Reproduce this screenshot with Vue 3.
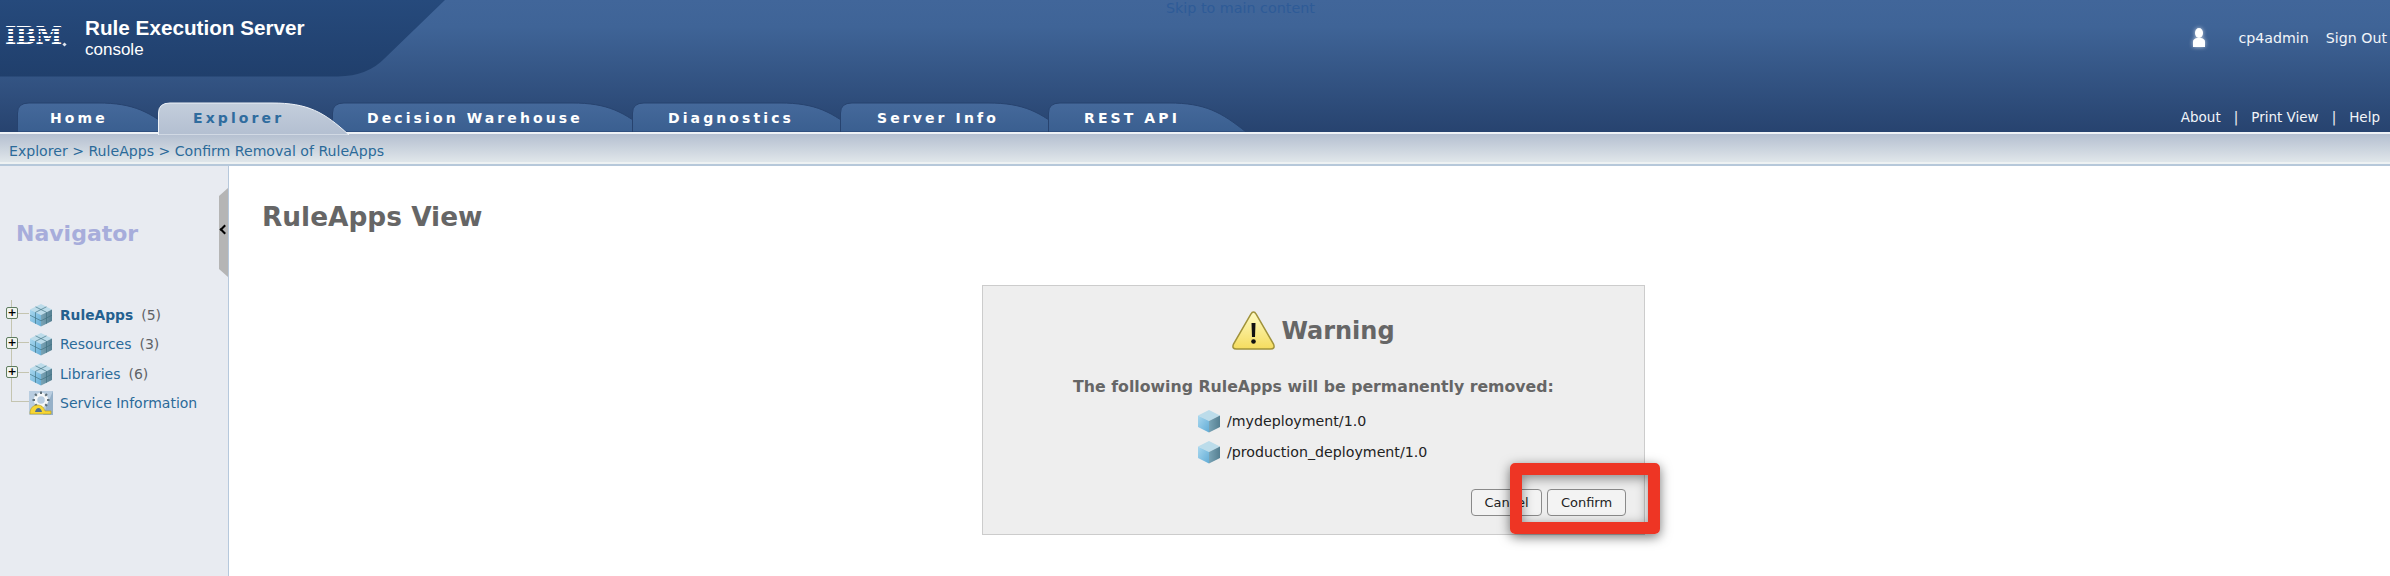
<script setup>
const tabs = [
	{ label: "Home", width: 159, pad: 33 },
	{ label: "Explorer", width: 192, pad: 35, active: true },
	{ label: "Decision Warehouse", width: 318, pad: 35 },
	{ label: "Diagnostics", width: 226, pad: 36 },
	{ label: "Server Info", width: 226, pad: 37 },
	{ label: "REST API", width: 199, pad: 36 },
];

const tree = [
	{ label: "RuleApps", count: 5, bold: true },
	{ label: "Resources", count: 3 },
	{ label: "Libraries", count: 6 },
];

const deployments = ["/mydeployment/1.0", "/production_deployment/1.0"];

// the tabs share one silhouette: rounded on the left, long sweep on the right
function tabPath(w, h) {
	return `M0.5 ${h} L0.5 11 Q0.5 1 12 1 L${w - 78} 1 C${w - 42} 1 ${w - 26} 10 ${w - 1} ${h} Z`;
}
</script>

<template>
	<div class="page">
		<svg class="defs" width="0" height="0" aria-hidden="true">
			<defs>
				<linearGradient id="tabFill" x1="0" y1="0" x2="0" y2="1">
					<stop offset="0" stop-color="#45699b" />
					<stop offset="1" stop-color="#3a5f90" />
				</linearGradient>
				<linearGradient id="tabActive" x1="0" y1="0" x2="0" y2="1">
					<stop offset="0" stop-color="#c3cedc" />
					<stop offset="1" stop-color="#b3bfd1" />
				</linearGradient>
				<linearGradient id="cubeLeft" x1="0" y1="0" x2="1" y2="1">
					<stop offset="0" stop-color="#a9d8ef" />
					<stop offset="1" stop-color="#62acd6" />
				</linearGradient>
				<linearGradient id="cubeRight" x1="0" y1="0" x2="1" y2="0">
					<stop offset="0" stop-color="#79a4b6" />
					<stop offset="1" stop-color="#557f91" />
				</linearGradient>
				<linearGradient id="warnFill" x1="0" y1="0" x2="0" y2="1">
					<stop offset="0" stop-color="#fefbc4" />
					<stop offset="1" stop-color="#f5dc5e" />
				</linearGradient>
				<linearGradient id="panelFill" x1="0" y1="0" x2="0" y2="1">
					<stop offset="0" stop-color="#264a7c" />
					<stop offset="1" stop-color="#203f6c" />
				</linearGradient>
				<symbol id="cube" viewBox="0 0 24 24">
					<path d="M12 1 L23 6.5 L12 12 L1 6.5 Z" fill="#bcdcea" />
					<path d="M1 6.5 L12 12 L12 23.5 L1 18 Z" fill="url(#cubeLeft)" />
					<path d="M23 6.5 L12 12 L12 23.5 L23 18 Z" fill="url(#cubeRight)" />
				</symbol>
				<symbol id="gridCube" viewBox="0 0 24 24">
					<use href="#cube" width="24" height="24" />
					<path d="M6.5 3.8 L17.5 9.3 M17.5 3.8 L6.5 9.3 M6.5 9.3 V20.8 M17.5 9.3 V20.8 M1 12.2 L12 17.8 L23 12.2" fill="none" stroke="#3f7080" stroke-opacity=".65" stroke-width="1" />
				</symbol>
			</defs>
		</svg>

		<header class="header">
			<svg class="brand-panel" width="450" height="78" viewBox="0 0 450 78" aria-hidden="true">
				<path d="M0 0 H445 L385 58 Q368 76 338 76.5 H0 Z" fill="url(#panelFill)" />
			</svg>
			<a class="skip-link">Skip to main content</a>

			<div class="masthead">
				<div class="brand">
					<span class="ibm">IBM<i class="ibm-dot"></i></span>
					<div class="product">
						<div class="product-name">Rule Execution Server</div>
						<div class="product-sub">console</div>
					</div>
				</div>
				<div class="user">
					<svg class="user-icon" width="12" height="19" viewBox="0 0 12 19" aria-hidden="true">
						<ellipse cx="6" cy="5" rx="4" ry="5" fill="#fff" />
						<path d="M0 19 V13.5 Q0 11 4 10 H8 Q12 11 12 13.5 V19 Z" fill="#fff" />
					</svg>
					<span class="user-name">cp4admin</span>
					<span>Sign Out</span>
				</div>
			</div>

			<div class="tabbar">
				<nav class="tabs">
					<div
						v-for="tab in tabs"
						:key="tab.label"
						class="tab"
						:class="{ active: tab.active }"
						:style="{ width: tab.width + 'px', paddingLeft: tab.pad + 'px' }"
					>
						<svg class="tab-shape" :width="tab.width" :height="tab.active ? 33 : 30" aria-hidden="true">
							<path
								:d="tabPath(tab.width, tab.active ? 33 : 30)"
								:fill="tab.active ? 'url(#tabActive)' : 'url(#tabFill)'"
								:stroke="tab.active ? '#eef2f7' : '#27436f'"
								stroke-width="1"
							/>
						</svg>
						<span class="tab-label">{{ tab.label }}</span>
					</div>
				</nav>
				<div class="util-links">
					<span>About</span><b>|</b><span>Print View</span><b>|</b><span>Help</span>
				</div>
			</div>
		</header>

		<div class="crumbs">Explorer &gt; RuleApps &gt; Confirm Removal of RuleApps</div>

		<div class="body">
			<aside class="sidebar">
				<h2 class="nav-title">Navigator</h2>
				<div class="handle"><span class="handle-arrow"></span></div>
				<div class="tree">
					<div class="tree-line"></div>
					<div v-for="item in tree" :key="item.label" class="tree-row">
						<span class="toggle">+</span>
						<span class="branch"></span>
						<svg class="node-icon" width="24" height="24"><use href="#gridCube" /></svg>
						<span class="tree-label" :class="{ bold: item.bold }">{{ item.label }}</span>
						<span class="count">({{ item.count }})</span>
					</div>
					<div class="tree-row">
						<span class="branch last"></span>
						<svg class="node-icon" width="24" height="24" viewBox="0 0 24 24" aria-hidden="true">
							<rect x="0" y="0" width="24" height="24" fill="#b9cde0" />
							<path d="M24 0 V24 H14 L24 0 Z" fill="#7d9db8" opacity=".6" />
							<circle cx="12" cy="9" r="5.5" fill="none" stroke="#f5f7f8" stroke-width="3.5" />
							<path d="M12 0.5 V3 M12 15 V17.5 M3.5 9 H6 M18 9 H20.500 M6 3 L7.800 4.800 M16.200 13.200 L18 15 M18 3 L16.200 4.800 M7.800 13.200 L6 15" stroke="#5f6f78" stroke-width="2" />
							<path d="M1 23 V21 Q2 14 9 14 Q14 14 16 20 H22 V23 Z" fill="#f6d635" stroke="#b59a20" stroke-width=".6" />
							<path d="M6 21 Q7 17 9.500 17 Q12 17 13 21 Z" fill="#4f6f8f" />
						</svg>
						<span class="tree-label">Service Information</span>
					</div>
				</div>
			</aside>

			<main class="main">
				<h1 class="view-title">RuleApps View</h1>
				<section class="dialog">
					<div class="dialog-title">
						<svg width="43" height="39" viewBox="0 0 43 39" aria-hidden="true">
							<path d="M21.5 1 Q23 1 24 3 L41.5 33 Q43.5 38 38.5 38 H4.5 Q-0.5 38 1.5 33 L19 3 Q20 1 21.5 1 Z" fill="url(#warnFill)" stroke="#a0923a" stroke-width="1.5" />
							<path d="M19.5 12 H23.5 L23 26 H20 Z" fill="#111" />
							<circle cx="21.5" cy="30.5" r="2.3" fill="#111" />
						</svg>
						<span>Warning</span>
					</div>
					<p class="dialog-message">The following RuleApps will be permanently removed:</p>
					<ul class="dialog-list">
						<li v-for="name in deployments" :key="name">
							<svg width="24" height="24"><use href="#cube" /></svg>
							<span>{{ name }}</span>
						</li>
					</ul>
					<div class="dialog-actions">
						<button class="btn cancel">Cancel</button>
						<button class="btn confirm">Confirm</button>
					</div>
					<div class="callout"></div>
				</section>
			</main>
		</div>
	</div>
</template>

<style>
html,
body {
	margin: 0;
	background: #fff;
}
</style>

<style scoped>
.page {
	width: 2390px;
	height: 576px;
	overflow: hidden;
	display: flex;
	flex-direction: column;
	font-family: "DejaVu Sans", sans-serif;
	font-size: 13px;
}

.defs {
	position: absolute;
}

.header {
	position: relative;
	height: 132px;
	flex: none;
	display: flex;
	flex-direction: column;
	background: linear-gradient(#41669a 0%, #3f6497 20%, #27436f 100%);
	color: #fff;
}

.brand-panel {
	position: absolute;
	left: 0;
	top: 0;
}

.skip-link {
	position: absolute;
	left: 1166px;
	top: 0;
	font-size: 14.3px;
	line-height: 17px;
	color: #2e5b97;
	white-space: nowrap;
}

.masthead {
	position: relative;
	height: 102px;
	flex: none;
	display: flex;
	justify-content: space-between;
}

.brand {
	display: flex;
	padding-left: 5px;
}

.ibm {
	position: relative;
	width: 61px;
	height: 24px;
	margin-top: 24px;
	font-family: "DejaVu Serif", serif;
	font-weight: 700;
	font-size: 24px;
	line-height: 24px;
	letter-spacing: -0.5px;
	color: #fff;
}

.ibm::after {
	content: "";
	position: absolute;
	left: 0;
	top: 0;
	width: 56px;
	height: 24px;
	background: repeating-linear-gradient(#234678 0 1.4px, transparent 1.4px 3.4px);
}

.ibm-dot {
	position: absolute;
	left: 58px;
	top: 19px;
	width: 3px;
	height: 3px;
	background: #dfe6ef;
	transform: rotate(45deg);
}

.product {
	margin-left: 19px;
	padding-top: 17px;
	font-family: "Liberation Sans", sans-serif;
}

.product-name {
	font-size: 20.7px;
	font-weight: 700;
	line-height: 22px;
}

.product-sub {
	font-size: 17px;
	line-height: 22px;
}

.user {
	display: flex;
	align-items: center;
	height: 19px;
	margin-top: 28px;
	padding-right: 3px;
	font-size: 14.2px;
	color: #f2f5f9;
}

.user-icon {
	filter: drop-shadow(0 0 2px rgba(255, 255, 255, 0.7));
}

.user-name {
	margin: 0 17px 0 34px;
}

.tabbar {
	position: relative;
	height: 30px;
	display: flex;
	justify-content: space-between;
}

.tabs {
	display: flex;
	padding-left: 17px;
}

.tab {
	position: relative;
	box-sizing: border-box;
	height: 30px;
	margin-right: -18px;
	font-weight: 700;
	font-size: 14px;
	line-height: 32px;
	letter-spacing: 3.1px;
	white-space: nowrap;
	color: #fff;
}

.tab.active {
	z-index: 2;
	color: #2f6c9e;
}

.tab-shape {
	position: absolute;
	left: 0;
	top: 0;
}

.tab-label {
	position: relative;
}

.util-links {
	display: flex;
	align-items: center;
	height: 30px;
	padding-right: 10px;
	font-size: 13.5px;
	color: #f2f5f9;
}

.util-links b {
	font-weight: 400;
	margin: 0 13px;
}

.crumbs {
	box-sizing: border-box;
	flex: none;
	height: 34px;
	padding: 4px 0 0 9px;
	border-top: 2px solid #eef2f6;
	border-bottom: 2px solid #b6c8da;
	background: linear-gradient(#b4bfd0, #e3e9ec);
	box-shadow: inset 0 -2px 0 #eef2f3;
	font-size: 14.1px;
	line-height: 27px;
	color: #2b6a99;
}

.body {
	flex: 1;
	display: flex;
	min-height: 0;
}

.sidebar {
	position: relative;
	box-sizing: border-box;
	width: 229px;
	flex: none;
	background: #e8ebf1;
	border-right: 1px solid #b6c8dc;
}

.nav-title {
	margin: 0;
	padding: 53px 0 0 16px;
	font-size: 22px;
	line-height: 30px;
	font-weight: 700;
	color: #a7addb;
}

.handle {
	position: absolute;
	left: 219px;
	top: 22px;
	width: 9px;
	height: 89px;
	background: #b5b5b5;
	clip-path: polygon(0 8px, 100% 0, 100% 100%, 0 81px);
}

.handle-arrow {
	position: absolute;
	left: 2px;
	top: 38px;
	width: 7px;
	height: 7px;
	border-left: 2.5px solid #000;
	border-bottom: 2.5px solid #000;
	box-sizing: border-box;
	transform: rotate(45deg);
}

.tree {
	position: relative;
	margin-top: 51px;
	padding-left: 6px;
}

.tree-line {
	position: absolute;
	left: 11px;
	top: 0;
	width: 1px;
	height: 102px;
	background: #c4c4b0;
}

.tree-row {
	position: relative;
	display: flex;
	align-items: center;
	height: 29.5px;
	white-space: nowrap;
}

.toggle {
	position: relative;
	box-sizing: border-box;
	width: 12px;
	height: 12px;
	margin-bottom: 3px;
	flex: none;
	border: 1.5px solid #5f7c60;
	border-radius: 2px;
	background: #f2f4ee;
	color: #000;
	font-weight: 700;
	font-size: 11px;
	line-height: 9px;
	text-align: center;
}

.branch {
	width: 11px;
	height: 1px;
	margin-bottom: 3px;
	flex: none;
	background: #c4c4b0;
}

.branch.last {
	width: 18px;
	margin-left: 5px;
}

.node-icon {
	flex: none;
}

.tree-label {
	margin-left: 7px;
	color: #2b6a99;
	font-size: 14px;
}

.tree-label.bold {
	font-weight: 700;
	color: #24608f;
	font-size: 13.8px;
}

.count {
	margin-left: 8px;
	color: #5f6266;
	font-size: 14px;
}

.main {
	flex: 1;
	min-width: 0;
	padding-left: 33px;
}

.view-title {
	margin: 0;
	padding-top: 33px;
	font-size: 26.4px;
	line-height: 36px;
	font-weight: 700;
	color: #666;
}

.dialog {
	position: relative;
	box-sizing: border-box;
	width: 663px;
	height: 250px;
	margin: 50px 0 0 720px;
	border: 1px solid #ccc;
	background: #eeeeee;
	color: #333;
}

.dialog-title {
	display: flex;
	justify-content: center;
	align-items: center;
	gap: 6px;
	margin-top: 25px;
	height: 39px;
	font-size: 24px;
	font-weight: 700;
	color: #666;
}

.dialog-message {
	margin: 27px 0 0;
	text-align: center;
	font-size: 15.75px;
	line-height: 20px;
	font-weight: 700;
	color: #666;
}

.dialog-list {
	list-style: none;
	margin: 8px 0 0;
	padding: 0 0 0 214px;
}

.dialog-list li {
	display: flex;
	align-items: center;
	gap: 6px;
	height: 31px;
	font-size: 14.2px;
	color: #222;
}

.dialog-actions {
	display: flex;
	justify-content: flex-end;
	gap: 5px;
	margin-top: 22px;
	padding-right: 18px;
}

.btn {
	box-sizing: border-box;
	height: 27px;
	padding: 0;
	border: 1.5px solid #8a8a8a;
	border-radius: 4px;
	background: #f3f3f3;
	font-family: "DejaVu Sans", sans-serif;
	font-size: 13px;
	color: #222;
}

.cancel {
	width: 71px;
}

.confirm {
	width: 79px;
}

.callout {
	position: absolute;
	left: 527px;
	top: 177px;
	box-sizing: border-box;
	width: 150px;
	height: 71px;
	border: 12px solid #ee3524;
	border-radius: 5px;
	box-shadow: 0 3px 12px rgba(0, 0, 0, 0.55), inset 0 3px 12px rgba(0, 0, 0, 0.45);
}
</style>
